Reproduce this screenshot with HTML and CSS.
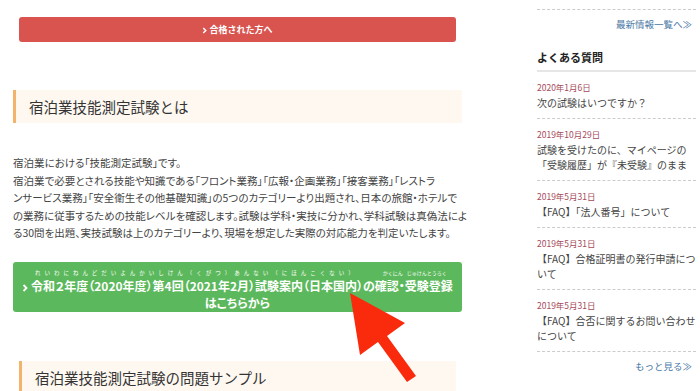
FILE: index.html
```html
<!DOCTYPE html>
<html lang="ja">
<head>
  <meta charset="UTF-8">
  <meta name="viewport" content="width=device-width, initial-scale=1.0">
  <title>宿泊業技能測定試験</title>
  <link rel="stylesheet" href="styles.css">
</head>
<body>
  <div class="page">
    <!-- Main Column -->
    <main class="content">
      <a class="btn btn-red" href="#">
        <svg class="chev chev-sm" viewBox="0 0 6 8"><path d="M1.5 1 L4.5 4 L1.5 7"/></svg>合格された方へ
      </a>

      <h2 class="sec-title">宿泊業技能測定試験とは</h2>

      <p class="lead">宿泊業における「技能測定試験」です。<br>宿泊業で必要とされる技能や知識である「フロント業務」「広報・企画業務」「接客業務」「レストラ<br>ンサービス業務」「安全衛生その他基礎知識」の5つのカテゴリーより出題され、日本の旅館・ホテルで<br>の業務に従事するための技能レベルを確認します。試験は学科・実技に分かれ、学科試験は真偽法によ<br>る30問を出題、実技試験は上のカテゴリーより、現場を想定した実際の対応能力を判定いたします。</p>

      <a class="btn btn-green" href="#">
        <span class="ruby-line">
          <span class="r1">れいわにねんどだいよんかいしけん（くがつ）あんない（にほんこくない）</span>
          <span class="r2">かくにん</span>
          <span class="r3">じゅけんとうろく</span>
        </span>
        <span class="btn-text"><svg class="chev" viewBox="0 0 6 8"><path d="M1.5 1 L4.5 4 L1.5 7"/></svg>令和２年度（2020年度）第4回（2021年2月）試験案内（日本国内）の確認・受験登録<br>はこちらから</span>
      </a>

      <h2 class="sec-title sec-title-inset">宿泊業技能測定試験の問題サンプル</h2>
    </main>

    <!-- Sidebar -->
    <aside class="sidebar">
      <div class="more-row more-top"><a href="#">最新情報一覧へ≫</a></div>

      <h3 class="side-title">よくある質問</h3>
      <ul class="faq">
        <li>
          <span class="faq-date">2020年1月6日</span>
          <a href="#">次の試験はいつですか？</a>
        </li>
        <li>
          <span class="faq-date">2019年10月29日</span>
          <a href="#">試験を受けたのに、マイページの「受験履歴」が『未受験』のまま</a>
        </li>
        <li>
          <span class="faq-date">2019年5月31日</span>
          <a href="#">【FAQ】「法人番号」について</a>
        </li>
        <li>
          <span class="faq-date">2019年5月31日</span>
          <a href="#">【FAQ】合格証明書の発行申請について</a>
        </li>
        <li>
          <span class="faq-date">2019年5月31日</span>
          <a href="#">【FAQ】合否に関するお問い合わせについて</a>
        </li>
      </ul>
      <div class="more-row"><a href="#">もっと見る≫</a></div>
    </aside>
  </div>

  <!-- Red pointer arrow over the green button -->
  <svg class="pointer" viewBox="0 0 700 391" width="700" height="391">
    <polygon points="350,293 405,323 387,336 416,376 407,382 378,342 360,355"/>
  </svg>
</body>
</html>
```

FILE: styles.css
```css
/* General Styles */
body {
  margin: 0;
  background: #fff;
  font-family: "Noto Sans CJK JP", "Noto Sans", sans-serif;
  color: #444;
  overflow: hidden;
}

a {
  text-decoration: none;
}

.page {
  display: flex;
  align-items: flex-start;
}

/* Main Column */
.content {
  width: 449px;
  margin-left: 13px;
  padding-top: 17px;
}

.btn {
  display: block;
  color: #fff;
  font-weight: bold;
  text-align: center;
  border-radius: 3px;
}

.btn-red {
  margin: 0 6px;
  height: 25px;
  line-height: 25px;
  font-size: 9px;
  background: #d9534f;
}

.chev {
  width: 6px;
  height: 8px;
  margin-right: 3px;
  vertical-align: -1px;
  fill: none;
  stroke: #fff;
  stroke-width: 1.8;
}

.chev-sm {
  width: 5px;
  height: 7px;
  margin-right: 2px;
}

.sec-title {
  margin: 48px 0 0;
  height: 33px;
  line-height: 33px;
  padding-left: 13px;
  border-left: 3px solid #f4b36d;
  background: #fef8f1;
  font-size: 14.5px;
  font-weight: normal;
  color: #333;
}

.sec-title-inset {
  margin: 49px 6px 0;
}

.lead {
  margin: 31px 0 0;
  font-size: 10.5px;
  line-height: 17.6px;
  color: #444;
  font-feature-settings: "palt";
  white-space: nowrap;
}

/* Green Button */
.btn-green {
  margin-top: 20px;
  padding: 7px 6px 1px;
  background: #5cb85c;
}

.ruby-line {
  display: flex;
  height: 8px;
  line-height: 8px;
  padding-left: 16px;
  font-size: 5.5px;
  font-weight: normal;
  text-align: left;
  white-space: nowrap;
}

.ruby-line .r1 {
  letter-spacing: 4px;
}

.ruby-line .r2 {
  margin-left: 25px;
  font-size: 5px;
}

.ruby-line .r3 {
  margin-left: 4px;
  font-size: 5px;
}

.btn-text {
  display: block;
  font-size: 12px;
  line-height: 17px;
  white-space: nowrap;
  font-feature-settings: "palt";
}

.btn-text .chev {
  margin-right: 3px;
}

/* Sidebar */
.sidebar {
  width: 159px;
  margin-left: 75px;
  padding-top: 9px;
}

.more-row {
  text-align: right;
  padding-right: 4px;
  margin-top: 7px;
  font-size: 9.5px;
  line-height: 14px;
}

.more-top {
  border-top: 1px dashed #ccc;
  padding-top: 0;
  margin-top: 0;
}

.more-top a {
  display: inline-block;
  margin-top: 7px;
}

.more-row a {
  color: #4a78a6;
}

.side-title {
  margin: 18px 0 0;
  padding-bottom: 5px;
  border-bottom: 2px solid #e6e6e6;
  font-size: 11px;
  line-height: 16px;
  color: #222;
}

.faq {
  list-style: none;
  margin: 0;
  padding: 0;
}

.faq li {
  padding: 9px 0 8px;
  border-bottom: 1px dashed #ccc;
}

.faq-date {
  display: block;
  font-size: 8.5px;
  line-height: 13px;
  color: #a64a5b;
}

.faq a {
  display: block;
  margin-top: 1px;
  font-size: 10px;
  line-height: 15px;
  color: #444;
}

/* Pointer arrow */
.pointer {
  position: absolute;
  top: 0;
  left: 0;
  pointer-events: none;
}

.pointer polygon {
  fill: #fa2a0c;
}
```
